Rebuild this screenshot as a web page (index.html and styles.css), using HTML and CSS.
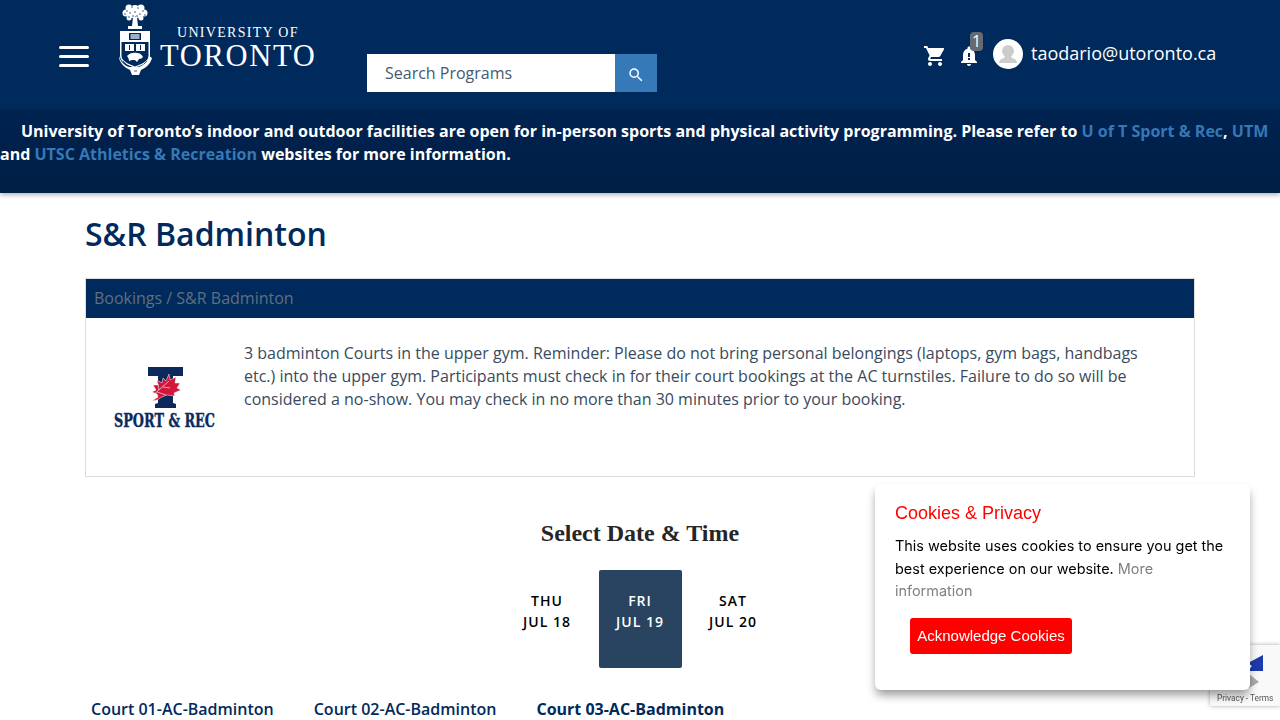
FILE: index.html
```html
<!DOCTYPE html>
<html lang="en">
<head>
    <meta name="viewport" content="width=device-width,initial-scale=1.0">
    <title>S&amp;R Badminton</title>
    <link rel="stylesheet" href="styles.css">
</head>
<body>

    <header class="top-bar">
        <button class="menu-button" aria-label="Menu"><span></span><span></span><span></span></button>

        <a class="brand" href="#">
            <svg class="crest" width="34" height="74" viewBox="0 0 34 74" fill="#fff">
                <!-- tree -->
                <path d="M15 14h4l1 9h4v3H10v-3h4z"/>
                <g>
                    <circle cx="17" cy="6" r="4"/>
                    <circle cx="11" cy="5" r="3.500"/>
                    <circle cx="23" cy="5" r="3.500"/>
                    <circle cx="8" cy="10" r="3.500"/>
                    <circle cx="26" cy="10" r="3.500"/>
                    <circle cx="14" cy="11" r="4"/>
                    <circle cx="21" cy="11" r="4"/>
                    <circle cx="11" cy="15" r="2.500"/>
                    <circle cx="23" cy="15" r="2.500"/>
                </g>
                <g fill="#002a5c">
                    <circle cx="9" cy="8" r=".7"/><circle cx="14" cy="4" r=".7"/><circle cx="20" cy="5" r=".7"/>
                    <circle cx="25" cy="8" r=".7"/><circle cx="12" cy="10" r=".7"/><circle cx="17" cy="9" r=".7"/>
                    <circle cx="22" cy="11" r=".7"/><circle cx="7" cy="11" r=".7"/><circle cx="27" cy="12" r=".7"/>
                    <circle cx="15" cy="13" r=".7"/><circle cx="19" cy="13" r=".7"/><circle cx="11" cy="14" r=".7"/>
                </g>
                <!-- shield -->
                <path fill-rule="evenodd" d="M2 28h30v25c0 6-8 9-15 12C10 62 2 59 2 53zM3.500 39v14c0 5 7 8 13.500 10.500C24 61 30.500 58 30.500 53V39z"/>
                <path d="M3 28h28v11H3z"/>
                <path fill="#002a5c" d="M11 30h12v7H11z"/>
                <path fill="#9fb0c6" d="M12.500 31h9v5h-9z"/>
                <path d="M7 41h9v7H7zM18 41h9v7h-9z"/>
                <path fill="none" stroke="#002a5c" d="M11.500 42v5M22.500 42v5"/>
                <path d="M9 53c2-3 7-4 10-3 3 0 5 2 6 4-1 1-2 2-4 2l-2 3-2-2h-3l-3 1c0-2-1-4-2-5z"/>
                <!-- motto scroll -->
                <path d="M1 55c1 5 6 10 11 12l2 5h7l2-5c5-2 10-7 11-12l-3-2c-1 5-5 9-10 11h-10c-5-2-9-6-10-11z"/>
                <path fill="none" stroke="#002a5c" stroke-width=".7" d="M5 58l3 3M29 58l-3 3M16 68h3"/>
            </svg>
            <span class="brand-text">
                <span class="brand-small">UNIVERSITY OF</span>
                <span class="brand-big">TORONTO</span>
            </span>
        </a>

        <form class="search-form">
            <input type="text" placeholder="Search Programs">
            <button type="button" aria-label="Search">
                <svg width="18" height="18" viewBox="0 0 24 24" fill="#fff"><path d="M15.500 14h-.79l-.28-.27A6.470 6.470 0 0 0 16 9.500 6.500 6.500 0 1 0 9.500 16c1.610 0 3.090-.59 4.230-1.570l.27.28v.79l5 4.990L20.490 19l-4.990-5zm-6 0C7.010 14 5 11.990 5 9.500S7.010 5 9.500 5 14 7.010 14 9.500 11.990 14 9.500 14z"/></svg>
            </button>
        </form>

        <div class="user-nav">
            <svg class="nav-icon" width="24" height="24" viewBox="0 0 24 24" fill="#fff"><path d="M7 18c-1.100 0-1.990.9-1.990 2S5.900 22 7 22s2-.9 2-2-.9-2-2-2zM1 2v2h2l3.600 7.590-1.350 2.450c-.16.280-.25.610-.25.960 0 1.100.9 2 2 2h12v-2H7.420c-.14 0-.25-.11-.25-.25l.03-.12.9-1.630h7.450c.75 0 1.410-.41 1.750-1.030l3.580-6.490A1 1 0 0 0 20 4H5.210l-.94-2H1zm16 16c-1.100 0-1.990.9-1.990 2s.89 2 1.990 2 2-.9 2-2-.9-2-2-2z"/></svg>
            <span class="bell">
                <svg width="24" height="24" viewBox="0 0 24 24" fill="#fff"><path d="M12 22c1.100 0 2-.9 2-2h-4c0 1.100.9 2 2 2zm6-6v-5c0-3.070-1.630-5.640-4.500-6.320V4c0-.83-.67-1.500-1.500-1.500s-1.500.67-1.500 1.500v.68C7.640 5.360 6 7.920 6 11v5l-2 2v1h16v-1l-2-2zm-5-3h-2V9h2v4zm0 3h-2v-2h2v2z"/></svg>
                <span class="bell-count">1</span>
            </span>
            <span class="avatar">
                <svg width="30" height="30" viewBox="0 0 30 30" fill="#ccc"><circle cx="15" cy="12" r="6"/><path d="M12 17h6l1 2c3 1 5 2 5 5H6c0-3 2-4 5-5z"/></svg>
            </span>
            <span class="user-email">taodario@utoronto.ca</span>
        </div>
    </header>

    <div class="notice">
        <p>University of Toronto’s indoor and outdoor facilities are open for in-person sports and physical activity programming. Please refer to <a href="#">U of T Sport &amp; Rec</a>, <a href="#">UTM</a> and <a href="#">UTSC Athletics &amp; Recreation</a> websites for more information.</p>
    </div>

    <main class="content">
        <h1>S&amp;R Badminton</h1>

        <section class="panel">
            <div class="panel-head">Bookings / S&amp;R Badminton</div>
            <div class="panel-body">
                <svg class="sport-logo" width="103" height="64" viewBox="0 0 103 64">
                    <path fill="#0b2a5b" d="M35 0h35v9H60v27l3 1v4H42v-4l3-1V9H35z"/>
                    <path fill="#d3163c" stroke="#fff" stroke-width=".5" d="M56 7l1 6 6-3-1 6 5 0-3 5 4 2-7 3 1 3-8-1-5 2-5 3-5 1 6-4-1-3-5-2 4-2-3-5 5 0-1-5 5 3 1-5 3 3z"/>
                    <path fill="none" stroke="#fff" stroke-width=".6" d="M38 30l18-16M46 23l-1-6M50 20l7 1M44 25l9 3"/>
                    <text class="sport-text" transform="translate(51.500 60) scale(1 1.300)" text-anchor="middle" textLength="101" lengthAdjust="spacingAndGlyphs">SPORT &amp; REC</text>
                </svg>
                <p>3 badminton Courts in the upper gym. Reminder: Please do not bring personal belongings (laptops, gym bags, handbags etc.) into the upper gym. Participants must check in for their court bookings at the AC turnstiles. Failure to do so will be considered a no-show. You may check in no more than 30 minutes prior to your booking.</p>
            </div>
        </section>

        <h2>Select Date &amp; Time</h2>

        <div class="date-row">
            <a class="date-item" href="#">THU<br>JUL 18</a>
            <a class="date-item active" href="#">FRI<br>JUL 19</a>
            <a class="date-item" href="#">SAT<br>JUL 20</a>
        </div>

        <div class="court-tabs">
            <a href="#">Court 01-AC-Badminton</a>
            <a href="#">Court 02-AC-Badminton</a>
            <a class="active" href="#">Court 03-AC-Badminton</a>
        </div>
    </main>

    <div class="recaptcha">
        <svg class="recaptcha-logo" width="40" height="40" viewBox="0 0 40 40">
            <path fill="#1c3aa9" d="M39 1v16H24l4-5-4-3z"/>
            <path fill="#ababab" d="M10 24h16l-1-4 10 8-10 6 1-3H10z"/>
        </svg>
        <div class="recaptcha-links">Privacy - Terms</div>
    </div>

    <aside class="cookie-box">
        <h3>Cookies &amp; Privacy</h3>
        <p>This website uses cookies to ensure you get the best experience on our website. <a href="#">More information</a></p>
        <button>Acknowledge Cookies</button>
    </aside>

</body>
</html>
```

FILE: styles.css
```css
html, body {
    height: 720px;
    overflow: hidden;
}

body {
    margin: 0;
    background: #fff;
    font-family: 'Open Sans', sans-serif;
    color: #3a4a5e;
}

a {
    text-decoration: none;
}

.top-bar {
    display: flex;
    height: 110px;
    padding-left: 59px;
    background: #002a5c;
    box-sizing: border-box;
}

.menu-button {
    display: flex;
    flex-direction: column;
    gap: 6px;
    width: 31px;
    margin: 46px 28px 0 0;
    padding: 0;
    background: none;
    border: none;
}

.menu-button span {
    display: block;
    width: 30px;
    height: 3px;
    background: #fff;
    border-radius: 2px;
}

.brand {
    display: flex;
    align-items: flex-start;
    width: 249px;
    padding-top: 3px;
    color: #fff;
    font-family: 'Liberation Serif', serif;
}

.crest {
    margin-right: 8px;
}

.brand-text {
    display: flex;
    flex-direction: column;
    padding-top: 22px;
}

.brand-small {
    margin-left: 17px;
    font-size: 14px;
    line-height: 15px;
    letter-spacing: 1.300px;
    white-space: nowrap;
}

.brand-big {
    font-size: 30.500px;
    line-height: 32px;
    letter-spacing: 1.700px;
}

.search-form {
    display: flex;
    width: 290px;
    height: 38px;
    margin-top: 54px;
}

.search-form input {
    width: 248px;
    padding: 0 18px;
    background: #fff;
    border: none;
    font-family: 'Open Sans', sans-serif;
    font-size: 16px;
    box-sizing: border-box;
}

.search-form input::placeholder {
    color: #46596f;
    opacity: 1;
}

.search-form button {
    display: flex;
    align-items: center;
    justify-content: center;
    width: 42px;
    padding: 4px 0 0;
    background: #3579b8;
    border: none;
}

.user-nav {
    display: flex;
    align-items: center;
    height: 30px;
    margin: 38px 0 0 266px;
    color: #fff;
}

.nav-icon {
    margin-top: 6px;
    margin-right: 10px;
}

.bell {
    position: relative;
    display: flex;
    margin-top: 6px;
    margin-right: 12px;
}

.bell-count {
    position: absolute;
    top: -12px;
    left: 13px;
    width: 13px;
    height: 19px;
    background: #666b73;
    border-radius: 4px;
    font-size: 16px;
    line-height: 19px;
    text-align: center;
}

.avatar {
    display: flex;
    width: 30px;
    height: 30px;
    margin-top: 1px;
    margin-right: 8px;
    background: #fff;
    border-radius: 50%;
    overflow: hidden;
}

.user-email {
    font-size: 18px;
    white-space: nowrap;
}

.notice {
    height: 83px;
    background: linear-gradient(to bottom, #002350, #001e45);
    box-shadow: 0 2px 5px rgba(0, 0, 0, 0.3);
    color: #fff;
    font-size: 16px;
    font-weight: 700;
    line-height: 23px;
}

.notice p {
    margin: 0;
    padding-top: 10px;
    text-indent: 21px;
}

.notice a {
    color: #3579b8;
}

.content {
    padding: 0 85px;
}

.content h1 {
    margin: 0;
    padding-top: 19px;
    color: #002a5c;
    font-size: 32px;
    font-weight: 600;
    line-height: 44px;
}

.panel {
    margin-top: 22px;
    height: 199px;
    border: 1px solid #ddd;
    box-sizing: border-box;
}

.panel-head {
    height: 39px;
    padding-left: 8px;
    background: #002a5c;
    color: #5f6f80;
    font-size: 16px;
    line-height: 39px;
}

.panel-body {
    display: flex;
    align-items: flex-start;
    padding: 24px 50px 0 27px;
}

.panel-body p {
    margin: 0 0 0 28px;
    font-size: 16px;
    line-height: 23px;
}

.sport-logo {
    flex: none;
    margin-top: 25px;
    overflow: visible;
}

.sport-text {
    fill: #0b2a5b;
    stroke: #0b2a5b;
    stroke-width: .3px;
    font-family: 'DejaVu Serif', serif;
    font-size: 14px;
    font-weight: 700;
}

.content h2 {
    margin: 41px 0 0;
    color: #262626;
    font-family: 'Liberation Serif', serif;
    font-size: 24px;
    font-weight: 700;
    line-height: 30px;
    text-align: center;
}

.date-row {
    display: flex;
    justify-content: center;
    gap: 10px;
    margin-top: 22px;
}

.date-item {
    width: 83px;
    height: 98px;
    padding-top: 20px;
    border-radius: 2px;
    box-sizing: border-box;
    color: #000;
    font-size: 14px;
    font-weight: 600;
    letter-spacing: 1px;
    line-height: 21px;
    text-align: center;
}

.date-item.active {
    background: #284461;
    color: #fff;
}

.court-tabs {
    display: flex;
    gap: 40px;
    margin-top: 30px;
    padding-left: 6px;
}

.court-tabs a {
    color: #002a5c;
    font-size: 16px;
    font-weight: 600;
    line-height: 22px;
    white-space: nowrap;
}

.court-tabs a.active {
    font-weight: 700;
}

.recaptcha {
    position: fixed;
    top: 645px;
    left: 1210px;
    width: 70px;
    height: 61px;
    background: #f9f9f9;
    border-radius: 2px 0 0 2px;
    box-shadow: 0 0 4px rgba(0, 0, 0, 0.35);
    overflow: hidden;
}

.recaptcha-logo {
    position: absolute;
    top: 9px;
    left: 14px;
}

.recaptcha-links {
    position: absolute;
    bottom: 3px;
    left: 7px;
    color: #555;
    font-family: Roboto, sans-serif;
    font-size: 8.300px;
    white-space: nowrap;
}

.cookie-box {
    position: fixed;
    top: 484px;
    left: 875px;
    width: 375px;
    height: 206px;
    padding: 18px 20px;
    background: #fff;
    border-radius: 6px;
    box-shadow: 0 6px 10px -1px rgba(0, 0, 0, 0.4);
    box-sizing: border-box;
    color: #000;
}

.cookie-box h3 {
    margin: 0;
    color: #f00;
    font-family: 'Liberation Sans', sans-serif;
    font-size: 18px;
    font-weight: 400;
    line-height: 22px;
}

.cookie-box p {
    margin: 11px 0 0;
    font-family: Inter, sans-serif;
    font-size: 14.450px;
    line-height: 22.500px;
}

.cookie-box a {
    color: #808080;
}

.cookie-box button {
    display: block;
    width: 162px;
    height: 36px;
    margin: 15px 0 0 15px;
    padding: 0;
    background: #f00;
    border: none;
    border-radius: 3px;
    color: #fff;
    font-family: 'Liberation Sans', sans-serif;
    font-size: 15px;
}
```
